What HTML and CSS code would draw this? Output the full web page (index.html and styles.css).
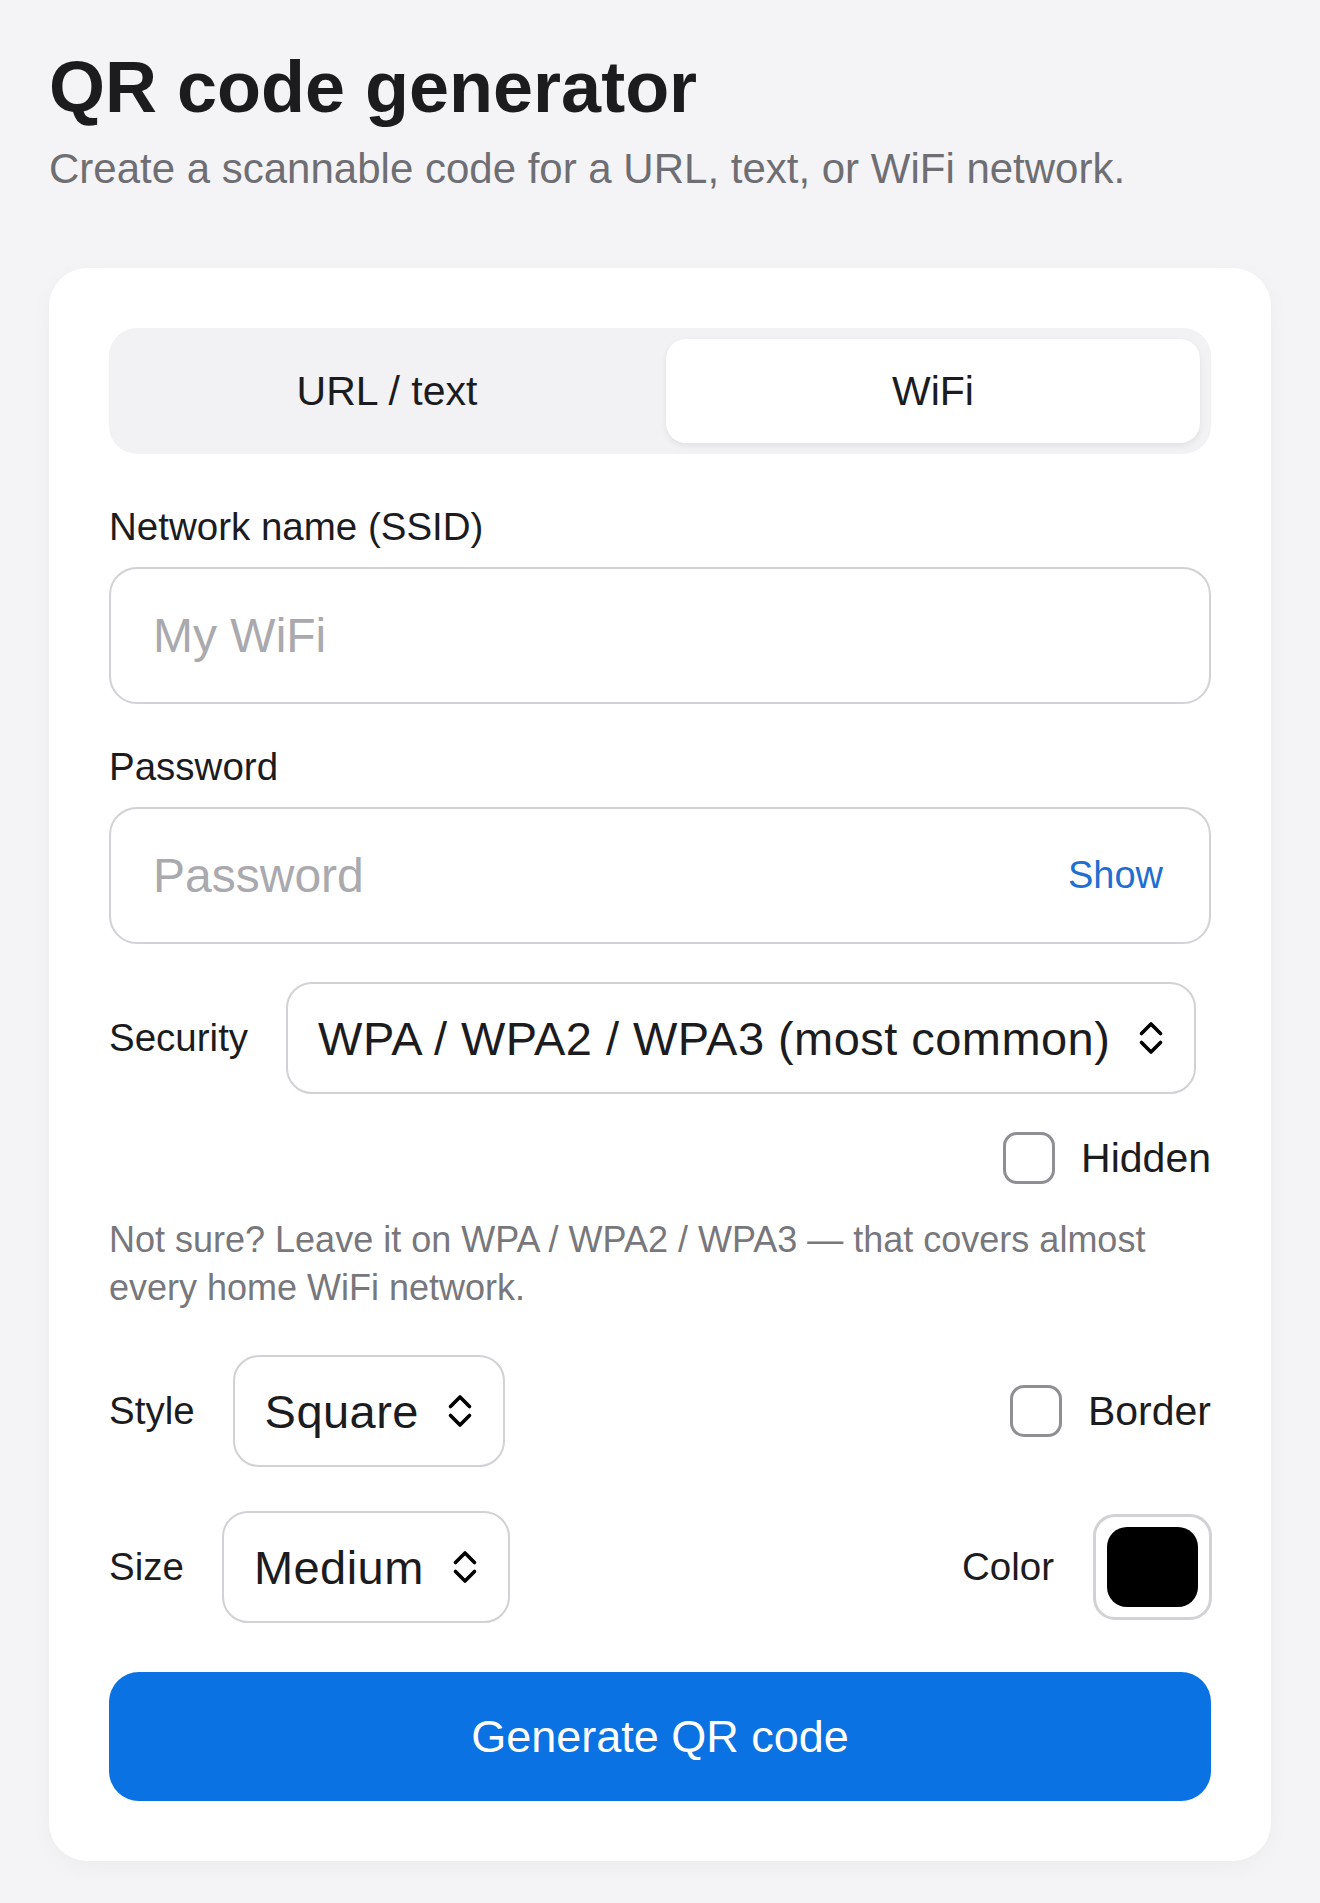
FILE: index.html
```html
<!DOCTYPE html>
<html lang="en">
<head>
<meta charset="utf-8">
<title>QR code generator</title>
<link rel="stylesheet" href="styles.css">
</head>
<body>
<main class="page">
  <header class="head">
    <h1 class="title">QR code generator</h1>
    <p class="subtitle">Create a scannable code for a URL, text, or WiFi network.</p>
  </header>

  <section class="card">
    <div class="segmented">
      <button class="seg-tab">URL / text</button>
      <button class="seg-tab is-active">WiFi</button>
    </div>

    <label class="field-label label-first" for="ssid">Network name (SSID)</label>
    <div class="field">
      <input id="ssid" class="field-input" type="text" placeholder="My WiFi">
    </div>

    <label class="field-label label-next" for="pw">Password</label>
    <div class="field">
      <input id="pw" class="field-input" type="password" placeholder="Password">
      <button class="show-btn">Show</button>
    </div>

    <div class="row row-security">
      <span class="row-label">Security</span>
      <button class="select">
        <span class="select-text">WPA / WPA2 / WPA3 (most common)</span>
        <svg class="chev" width="26" height="36" viewBox="0 0 26 36" aria-hidden="true"><path d="M3.5 13.5 L13 4 L22.5 13.5 M3.5 22.5 L13 32 L22.5 22.5" fill="none" stroke="#000" stroke-width="3.6" stroke-linecap="round" stroke-linejoin="round"/></svg>
      </button>
    </div>

    <div class="row row-hidden">
      <label class="check"><span class="check-box"></span><span class="check-text">Hidden</span></label>
    </div>

    <p class="help">Not sure? Leave it on WPA / WPA2 / WPA3 — that covers almost every home WiFi network.</p>

    <div class="row row-style">
      <span class="row-label">Style</span>
      <button class="select">
        <span class="select-text">Square</span>
        <svg class="chev" width="26" height="36" viewBox="0 0 26 36" aria-hidden="true"><path d="M3.5 13.5 L13 4 L22.5 13.5 M3.5 22.5 L13 32 L22.5 22.5" fill="none" stroke="#000" stroke-width="3.6" stroke-linecap="round" stroke-linejoin="round"/></svg>
      </button>
      <span class="spacer"></span>
      <label class="check"><span class="check-box"></span><span class="check-text">Border</span></label>
    </div>

    <div class="row row-size">
      <span class="row-label">Size</span>
      <button class="select">
        <span class="select-text">Medium</span>
        <svg class="chev" width="26" height="36" viewBox="0 0 26 36" aria-hidden="true"><path d="M3.5 13.5 L13 4 L22.5 13.5 M3.5 22.5 L13 32 L22.5 22.5" fill="none" stroke="#000" stroke-width="3.6" stroke-linecap="round" stroke-linejoin="round"/></svg>
      </button>
      <span class="spacer"></span>
      <span class="row-label color-label">Color</span>
      <span class="swatch"><span class="swatch-fill"></span></span>
    </div>

    <button class="generate">Generate QR code</button>
  </section>
</main>
</body>
</html>
```

FILE: styles.css
```css
* { box-sizing: border-box; }

html, body {
  margin: 0;
  background: #f4f4f7;
}

body {
  font-family: "Liberation Sans", Arial, Helvetica, sans-serif;
  color: #1c1c1e;
}

.page {
  padding: 44px 49px 42px;
}

.title {
  margin: 0;
  font-size: 72px;
  line-height: 86px;
  font-weight: 700;
  color: #1c1c1e;
}

.subtitle {
  margin: 11px 0 0;
  font-size: 42px;
  line-height: 55px;
  color: #6e6e73;
}

.card {
  margin-top: 72px;
  background: #ffffff;
  border-radius: 38px;
  padding: 60px;
  display: flex;
  flex-direction: column;
  box-shadow: 0 6px 22px rgba(0, 0, 0, 0.035);
}

button {
  font-family: inherit;
  color: inherit;
  background: none;
  border: 0;
  padding: 0;
  margin: 0;
  cursor: pointer;
}

/* segmented control */
.segmented {
  display: flex;
  gap: 12px;
  height: 126px;
  padding: 11px;
  background: #f2f2f5;
  border-radius: 28px;
}

.seg-tab {
  flex: 1 1 0;
  height: 104px;
  font-size: 41px;
  color: #1c1c1e;
  border-radius: 20px;
}

.seg-tab.is-active {
  background: #ffffff;
  box-shadow: 0 3px 6px rgba(0, 0, 0, 0.07), 0 0 1px rgba(0, 0, 0, 0.04);
}

/* labels + inputs */
.field-label {
  display: block;
  font-size: 38.5px;
  line-height: 46px;
  color: #1c1c1e;
  margin-bottom: 17px;
}

.label-first { margin-top: 50px; }
.label-next { margin-top: 40px; }

.field {
  display: flex;
  align-items: center;
  height: 137px;
  border: 2.5px solid #d1d1d6;
  border-radius: 28px;
  background: #fff;
  padding: 0 46px 0 42px;
}

.field-input {
  flex: 1 1 auto;
  min-width: 0;
  border: 0;
  outline: none;
  background: transparent;
  font-family: inherit;
  font-size: 48px;
  color: #1c1c1e;
  padding: 0;
}

.field-input::placeholder {
  color: #a9a9ae;
}

.show-btn {
  font-size: 38px;
  color: #1f6fd2;
}

/* rows */
.row {
  display: flex;
  align-items: center;
}

.row-security { margin-top: 38px; height: 112px; }
.row-hidden { margin-top: 38px; height: 52px; justify-content: flex-end; }
.row-style { margin-top: 43px; height: 112px; }
.row-size { margin-top: 44px; height: 112px; }

.row-label {
  font-size: 38.5px;
  line-height: 46px;
  color: #1c1c1e;
  margin-right: 38px;
}

.color-label { margin-right: 39px; }

.spacer { flex: 1 1 auto; }

.select {
  display: flex;
  align-items: center;
  height: 112px;
  padding: 0 30px;
  border: 2.5px solid #d1d1d6;
  border-radius: 26px;
  background: #fff;
}

.select-text {
  font-size: 47px;
  letter-spacing: 0.45px;
  color: #1c1c1e;
  white-space: nowrap;
}

.chev {
  display: block;
  margin-left: 28px;
  flex: none;
}

/* checkboxes */
.check {
  display: flex;
  align-items: center;
}

.check-box {
  width: 52px;
  height: 52px;
  border: 3.5px solid #8e8e93;
  border-radius: 14px;
  background: #fff;
  flex: none;
}

.check-text {
  margin-left: 26px;
  font-size: 41px;
  color: #1c1c1e;
}

.help {
  margin: 32px 0 0;
  font-size: 36px;
  line-height: 48px;
  color: #77777c;
}

/* color swatch */
.swatch {
  display: flex;
  width: 119px;
  height: 106px;
  padding: 10px 11px;
  border: 3px solid #d1d1d6;
  border-radius: 22px;
  background: #fff;
  margin-right: -1px;
}

.swatch-fill {
  flex: 1 1 auto;
  background: #000;
  border-radius: 20px;
}

/* primary button */
.generate {
  margin-top: 49px;
  height: 129px;
  border-radius: 30px;
  background: #0a72e3;
  color: #ffffff;
  font-size: 45px;
}
```
